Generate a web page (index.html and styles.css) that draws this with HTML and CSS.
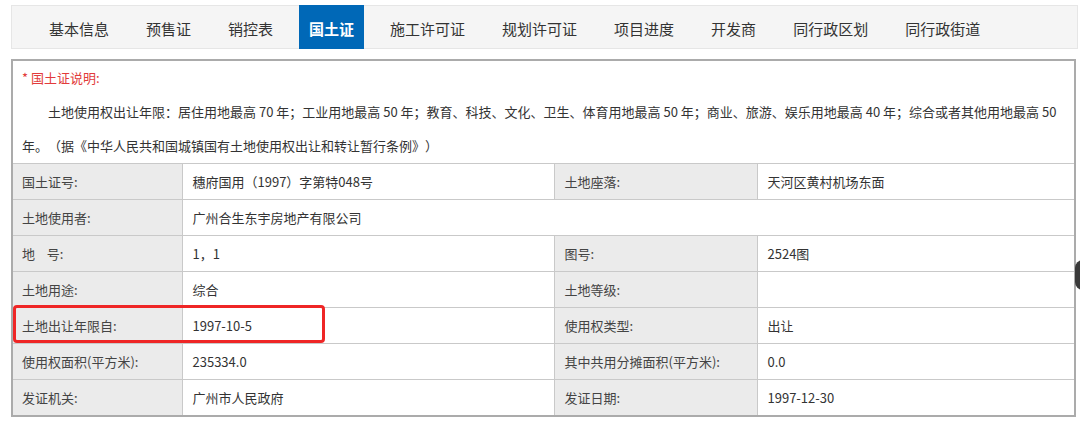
FILE: index.html
```html
<!DOCTYPE html>
<html>
<head>
    <meta charset="utf-8">
    <title>国土证</title>
    <link rel="stylesheet" href="styles.css">
</head>
<body>
    <div class="tabs">
        <a class="tab">基本信息</a>
        <a class="tab">预售证</a>
        <a class="tab">销控表</a>
        <a class="tab active">国土证</a>
        <a class="tab">施工许可证</a>
        <a class="tab">规划许可证</a>
        <a class="tab">项目进度</a>
        <a class="tab">开发商</a>
        <a class="tab">同行政区划</a>
        <a class="tab">同行政街道</a>
    </div>

    <div class="cert-box">
        <div class="note">
            <p class="note-title">* 国土证说明:</p>
            <p class="note-text">土地使用权出让年限：居住用地最高 70 年；工业用地最高 50 年；教育、科技、文化、卫生、体育用地最高 50 年；商业、旅游、娱乐用地最高 40 年；综合或者其他用地最高 50 年。（据《中华人民共和国城镇国有土地使用权出让和转让暂行条例》）</p>
        </div>

        <table class="cert-table">
            <colgroup>
                <col class="c-label1">
                <col class="c-value1">
                <col class="c-label2">
                <col>
            </colgroup>
            <tr>
                <td class="label">国土证号:</td>
                <td>穗府国用（1997）字第特048号</td>
                <td class="label">土地座落:</td>
                <td>天河区黄村机场东面</td>
            </tr>
            <tr>
                <td class="label">土地使用者:</td>
                <td colspan="3">广州合生东宇房地产有限公司</td>
            </tr>
            <tr>
                <td class="label">地&nbsp;&nbsp;&nbsp;&nbsp;号:</td>
                <td>1，1</td>
                <td class="label">图号:</td>
                <td>2524图</td>
            </tr>
            <tr>
                <td class="label">土地用途:</td>
                <td>综合</td>
                <td class="label">土地等级:</td>
                <td></td>
            </tr>
            <tr>
                <td class="label marked">土地出让年限自:<span class="mark"></span></td>
                <td>1997-10-5</td>
                <td class="label">使用权类型:</td>
                <td>出让</td>
            </tr>
            <tr>
                <td class="label">使用权面积(平方米):</td>
                <td>235334.0</td>
                <td class="label">其中共用分摊面积(平方米):</td>
                <td>0.0</td>
            </tr>
            <tr>
                <td class="label">发证机关:</td>
                <td>广州市人民政府</td>
                <td class="label">发证日期:</td>
                <td>1997-12-30</td>
            </tr>
        </table>
    </div>

    <div class="side-handle"></div>
</body>
</html>
```

FILE: styles.css
```css
body {
    margin: 5px 2px 0 11px;
    font-family: "Noto Sans CJK SC", sans-serif;
    color: #333;
    background: #fff;
    text-spacing-trim: space-all;
}

.tabs {
    display: flex;
    height: 44px;
    box-sizing: border-box;
    padding-left: 18.5px;
    background: #f5f5f5;
    border: 1px solid #e6e6e6;
}

.tab {
    display: flex;
    align-items: center;
    padding: 2px 11px 0;
    margin: 0 7.5px;
    font-size: 15px;
    color: #333;
    cursor: pointer;
}

.tab.active {
    margin-top: -1px;
    margin-bottom: -1px;
    padding: 2px 10px 0;
    background: #0068b7;
    color: #fff;
    font-weight: bold;
}

.cert-box {
    margin-top: 10px;
    width: 1065px;
    box-sizing: border-box;
    border: 2px solid #ababab;
    font-size: 13px;
}

.note {
    padding: 0 12px 0 9px;
    line-height: 34px;
}

.note p {
    margin: 0;
}

.note-title {
    color: #e23b3b;
}

.note-text {
    text-indent: 2em;
}

.cert-table {
    width: 100%;
    border-collapse: collapse;
    table-layout: fixed;
}

.c-label1 { width: 169px; }
.c-value1 { width: 372px; }
.c-label2 { width: 203px; }

.cert-table td {
    height: 35px;
    padding: 0 0 0 10px;
    border: 1px solid #c9c9c9;
    background: #fff;
    white-space: nowrap;
}

.cert-table tr td:first-child { border-left: none; padding-left: 9px; }
.cert-table tr td:last-child { border-right: none; }
.cert-table tr:last-child td { border-bottom: none; }

.cert-table td.label {
    background: #ebebeb;
    color: #444;
}

.cert-table td.marked {
    position: relative;
}

.mark {
    position: absolute;
    left: 0;
    top: -3px;
    width: 312px;
    height: 38px;
    box-sizing: border-box;
    border: 3px solid #ef2626;
    border-radius: 4px;
    pointer-events: none;
}

.side-handle {
    position: absolute;
    left: 1075px;
    top: 260px;
    width: 10px;
    height: 30px;
    background: #3a3a3a;
    border-radius: 8px 0 0 8px;
}
```
